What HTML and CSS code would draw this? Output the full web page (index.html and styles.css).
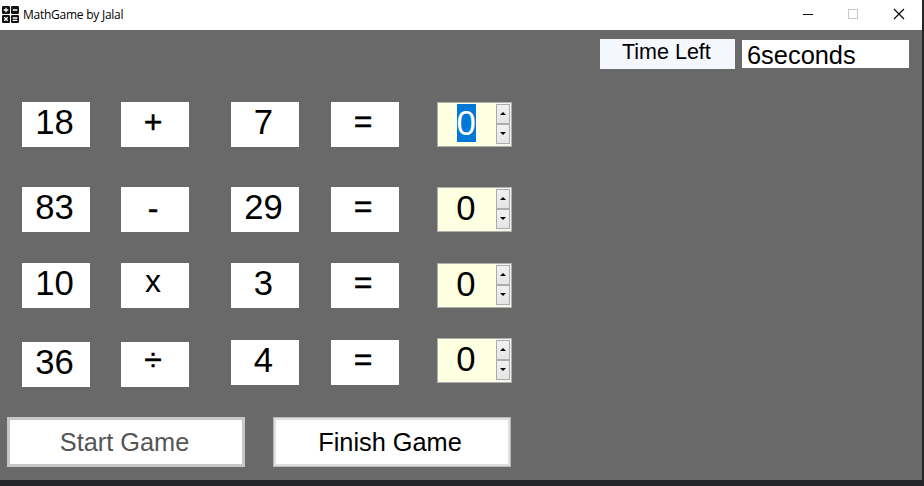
FILE: index.html
```html
<!DOCTYPE html>
<html lang="en">
<head>
<meta charset="utf-8">
<title>MathGame by Jalal</title>
<link rel="stylesheet" href="styles.css">
</head>
<body>
<div class="window">
  <header class="titlebar">
    <svg class="app-icon" width="17" height="17" viewBox="0 0 17 17">
      <g fill="#111"><rect x="0" y="0" width="8" height="8" rx="1.3"/><rect x="9" y="0" width="8" height="8" rx="1.3"/><rect x="0" y="9" width="8" height="8" rx="1.3"/><rect x="9" y="9" width="8" height="8" rx="1.3"/></g>
      <path d="M4 1.7v4.6M1.7 4h4.6M10.7 4h4.6M2.3 11.3l3.4 3.4M5.7 11.3l-3.4 3.4M10.7 12h4.6M10.7 14.3h4.6" stroke="#fff" stroke-width="1.3"/>
    </svg>
    <span class="title">MathGame by Jalal</span>
    <svg class="controls" width="110" height="12" viewBox="0 0 110 12" fill="none">
      <path d="M0 6.5h10" stroke="#000"/>
      <rect x="45.5" y="1.5" width="9" height="9" stroke="#c8c8c8"/>
      <path d="M91 1l10 10M101 1l-10 10" stroke="#000" stroke-width="1.1"/>
    </svg>
  </header>
  <main class="form">
    <div class="timer">
      <div class="time-label">Time Left</div>
      <div class="time-value">6seconds</div>
    </div>
    <div class="problems">
      <div class="cell">18</div><div class="cell op">+</div><div class="cell">7</div><div class="cell op equals">=</div>
      <div class="spinner"><span class="value"><span class="selected">0</span></span><span class="arrows"><i class="up"></i><i class="down"></i></span></div>

      <div class="cell">83</div><div class="cell op minus">-</div><div class="cell">29</div><div class="cell op equals">=</div>
      <div class="spinner"><span class="value">0</span><span class="arrows"><i class="up"></i><i class="down"></i></span></div>

      <div class="cell">10</div><div class="cell op times">x</div><div class="cell">3</div><div class="cell op equals">=</div>
      <div class="spinner"><span class="value">0</span><span class="arrows"><i class="up"></i><i class="down"></i></span></div>

      <div class="cell lowered">36</div><div class="cell op divide lowered">÷</div><div class="cell">4</div><div class="cell op equals">=</div>
      <div class="spinner raised"><span class="value">0</span><span class="arrows"><i class="up"></i><i class="down"></i></span></div>
    </div>
    <div class="actions">
      <button class="start" disabled>Start Game</button>
      <button class="finish">Finish Game</button>
    </div>
  </main>
</div>
</body>
</html>
```
FILE: styles.css
```css
* { box-sizing: border-box; }
body {
  margin: 0;
  width: 924px;
  height: 486px;
  overflow: hidden;
  background: #252528;
  font-family: "Liberation Sans", Arial, sans-serif;
  color: #000;
}
.window { width: 922px; height: 480px; background: #696969; }
.titlebar {
  display: flex;
  align-items: center;
  height: 30px;
  padding: 0 18px 2px 2px;
  background: #fff;
}
.title {
  margin-left: 4px;
  font: 12px/16px "Open Sans", "Noto Sans", sans-serif;
  letter-spacing: -0.25px;
  padding-top: 2px;
}
.controls { margin-left: auto; width: 110px; margin-right: -9px; }
.form { height: 450px; padding-top: 9px; }
.timer { display: flex; gap: 7px; margin-left: 600px; height: 30px; }
.time-label {
  width: 135px;
  height: 30px;
  padding-left: 22px;
  background: #f4f7fe;
  font-size: 21.5px;
  line-height: 27px;
}
.time-value {
  width: 167px;
  height: 28px;
  margin-top: 1px;
  padding-left: 5px;
  background: #fff;
  font-size: 25.4px;
  line-height: 31px;
}
.problems {
  display: grid;
  grid-template-columns: 99px 110px 100px 106px 75px;
  grid-template-rows: 85px 76px 77px 45px;
  margin: 33px 0 0 22px;
}
.cell {
  width: 68px;
  height: 45px;
  padding-right: 3px;
  background: #fff;
  font-size: 34.67px;
  line-height: 40px;
  text-align: center;
}
.op {
  padding-right: 4px;
  font-size: 32px;
  line-height: 40px;
  -webkit-text-stroke: 0.4px #000;
}
.equals { line-height: 39px; }
.minus { line-height: 43px; }
.times { line-height: 37px; -webkit-text-stroke: 0; }
.divide { line-height: 34px; }
.lowered { margin-top: 2px; }
.raised { margin-top: -2px; }
.spinner {
  display: flex;
  width: 75px;
  height: 45px;
  border: 1px solid #aeb0ac;
  background: #f6f6f1;
}
.value {
  width: 58px;
  padding-right: 2px;
  background: #ffffe1;
  font-size: 34.67px;
  line-height: 41px;
  text-align: center;
}
.selected {
  display: block;
  width: 19px;
  height: 38px;
  margin: 1px auto 0;
  line-height: 39px;
  background: #0078d7;
  color: #fff;
}
.arrows { display: flex; flex-direction: column; width: 15px; padding: 1px 1px 2px 0; }
.arrows i {
  display: flex;
  align-items: center;
  justify-content: center;
  width: 14px;
  height: 20px;
  padding: 0 1px 2px 0;
  border: 1px solid #acacac;
  background: linear-gradient(#f1f1f1, #e5e5e5);
}
.arrows i::after { content: ""; border: 3px solid transparent; }
.arrows .up::after { border-top: 0; border-bottom-color: #000; }
.arrows .down::after { border-bottom: 0; border-top-color: #000; }
.actions { display: flex; gap: 28px; margin: 32px 0 0 7px; }
.actions button {
  width: 238px;
  height: 50px;
  padding: 0 3px 0 0;
  border: 3px solid #c7c7c7;
  background: #fff;
  font: 25.33px/44px "Liberation Sans", Arial, sans-serif;
  color: #000;
}
.actions .start { color: #555; }
.actions .finish { padding-right: 4px; border-color: #dedede; outline: 1px solid #b9b9b9; outline-offset: -1px; }
```
